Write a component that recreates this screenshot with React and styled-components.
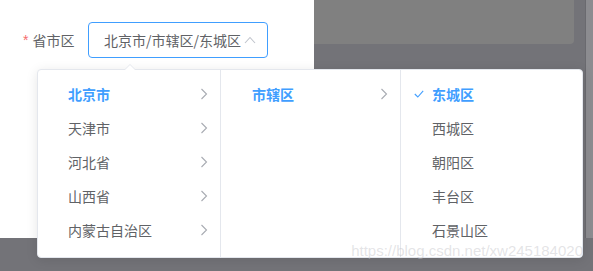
import React from "react";
import styled, { createGlobalStyle } from "styled-components";

const GlobalStyle = createGlobalStyle`
  html, body { margin: 0; padding: 0; }
  body { font-family: "Noto Sans CJK SC", "Noto Sans", sans-serif; }
`;

const Stage = styled.div`
  position: relative;
  width: 593px;
  height: 271px;
  overflow: hidden;
  background: #737378;
  display: grid;
  grid-template-columns: 314px 1fr;
  grid-template-rows: 238px 1fr;
`;

const Dialog = styled.div`
  background: #ffffff;
  padding: 22px 0 0 23px;
  box-sizing: border-box;
`;

const MaskSide = styled.div`
  display: flex;
`;

const MaskMain = styled.div`
  flex: 1;
`;

const DimmedCard = styled.div`
  height: 44px;
  width: 260px;
  background: #808080;
  border-bottom-right-radius: 4px;
`;

const ScrollStrip = styled.div`
  width: 7px;
  background: #8c8c90;
  border-left: 1px solid #6a6a6f;
`;

const FormRow = styled.div`
  display: flex;
  align-items: center;
  height: 36px;
`;

const Label = styled.label`
  width: 65px;
  font-size: 14px;
  color: #606266;
  display: flex;
  align-items: center;
  gap: 4px;
`;

const Required = styled.span`
  color: #f56c6c;
  font-size: 14px;
  font-family: "Liberation Sans", sans-serif;
`;

const InputBox = styled.div`
  width: 180px;
  height: 36px;
  box-sizing: border-box;
  border: 1px solid #409eff;
  border-radius: 4px;
  display: flex;
  align-items: center;
  padding: 0 11px 0 15px;
  font-size: 14px;
  color: #606266;
  justify-content: space-between;
`;

const Popper = styled.div`
  position: absolute;
  left: 37px;
  top: 69px;
  background: #fff;
  border: 1px solid #e4e7ed;
  border-radius: 4px;
  box-shadow: 0 2px 12px rgba(0, 0, 0, 0.1);
  display: flex;
`;

const Arrow = styled.div`
  position: absolute;
  top: -6px;
  left: 86px;
  width: 0;
  height: 0;
  border-left: 6px solid transparent;
  border-right: 6px solid transparent;
  border-bottom: 6px solid #e4e7ed;
  &::after {
    content: "";
    position: absolute;
    left: -5px;
    top: 1px;
    border-left: 5px solid transparent;
    border-right: 5px solid transparent;
    border-bottom: 5px solid #fff;
  }
`;

const Menu = styled.ul`
  list-style: none;
  margin: 0;
  width: ${(p) => p.$w}px;
  height: 187px;
  box-sizing: border-box;
  padding: 7px 0 6px;
  border-right: ${(p) => (p.$last ? "none" : "1px solid #e4e7ed")};
`;

const Node = styled.li`
  position: relative;
  height: 34px;
  display: flex;
  align-items: center;
  padding-left: ${(p) => p.$pad}px;
  font-size: 14px;
  color: ${(p) => (p.$active ? "#409eff" : "#606266")};
  font-weight: ${(p) => (p.$active ? 700 : 400)};
`;

const Postfix = styled.span`
  position: absolute;
  right: 12px;
  top: 50%;
  transform: translateY(-50%);
  display: flex;
`;

const Check = styled.span`
  position: absolute;
  left: 13px;
  top: 50%;
  transform: translateY(-50%);
  display: flex;
`;

const Watermark = styled.div`
  position: absolute;
  right: 10px;
  top: 242px;
  font-family: "Liberation Sans", sans-serif;
  font-size: 15px;
  color: rgba(195, 195, 200, 0.45);
  pointer-events: none;
`;

const ChevronRight = () => (
  <svg width="8" height="12" viewBox="0 0 8 12">
    <path d="M1.5 1 L6.5 6 L1.5 11" fill="none" stroke="#a8abb2" strokeWidth="1.1" />
  </svg>
);

const ChevronUp = () => (
  <svg width="12" height="8" viewBox="0 0 12 8">
    <path d="M1 7 L6 1.5 L11 7" fill="none" stroke="#c0c4cc" strokeWidth="1.1" />
  </svg>
);

const CheckIcon = () => (
  <svg width="10" height="8" viewBox="0 0 10 8">
    <path d="M0.8 4 L3.8 7 L9.2 0.8" fill="none" stroke="#409eff" strokeWidth="1.1" />
  </svg>
);

const provinces = ["北京市", "天津市", "河北省", "山西省", "内蒙古自治区"];
const cities = ["市辖区"];
const districts = ["东城区", "西城区", "朝阳区", "丰台区", "石景山区"];

export default function App() {
  return (
    <>
      <GlobalStyle />
      <Stage>
        <Dialog>
          <FormRow>
            <Label>
              <Required>*</Required>
              省市区
            </Label>
            <InputBox>
              <span>北京市/市辖区/东城区</span>
              <ChevronUp />
            </InputBox>
          </FormRow>
        </Dialog>
        <MaskSide>
          <MaskMain>
            <DimmedCard />
          </MaskMain>
          <ScrollStrip />
        </MaskSide>
        <div />
        <div />
        <Popper>
          <Arrow />
          <Menu $w={183}>
            {provinces.map((p, i) => (
              <Node key={p} $pad={30} $active={i === 0}>
                {p}
                <Postfix>
                  <ChevronRight />
                </Postfix>
              </Node>
            ))}
          </Menu>
          <Menu $w={180}>
            {cities.map((c) => (
              <Node key={c} $pad={31} $active>
                {c}
                <Postfix>
                  <ChevronRight />
                </Postfix>
              </Node>
            ))}
          </Menu>
          <Menu $w={181} $last>
            {districts.map((d, i) => (
              <Node key={d} $pad={31} $active={i === 0}>
                {i === 0 && (
                  <Check>
                    <CheckIcon />
                  </Check>
                )}
                {d}
              </Node>
            ))}
          </Menu>
        </Popper>
        <Watermark>https://blog.csdn.net/xw245184020</Watermark>
      </Stage>
    </>
  );
}
